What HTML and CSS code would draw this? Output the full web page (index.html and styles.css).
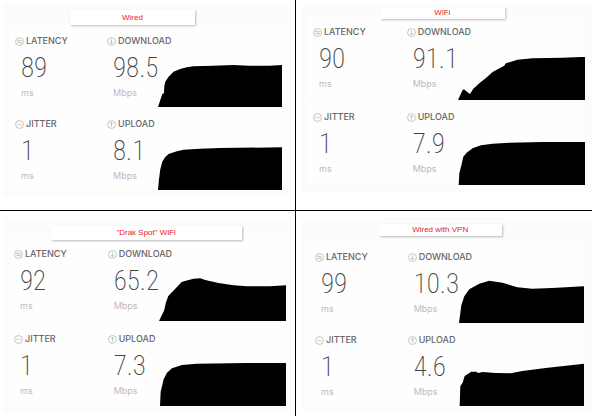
FILE: index.html
```html
<!DOCTYPE html>
<html lang="en">
<head>
    <meta charset="UTF-8">
    <meta name="viewport" content="width=device-width, initial-scale=1.0">
    <title>Speed Test Comparison</title>
    <link rel="stylesheet" href="styles.css">
</head>
<body>
    <svg class="symbols" aria-hidden="true">
        <symbol id="latency" viewBox="0 0 16 16">
            <circle cx="8" cy="8" r="7"/>
            <path d="M12 6.5H4.5L7 4M4 9.5h7.500L9 12"/>
        </symbol>
        <symbol id="jitter" viewBox="0 0 16 16">
            <circle cx="8" cy="8" r="7"/>
            <path d="M4 8.500q2-2.500 4-.5t4-.5"/>
        </symbol>
        <symbol id="download" viewBox="0 0 16 16">
            <circle cx="8" cy="8" r="7"/>
            <path d="M8 4v8M5 9l3 3 3-3"/>
        </symbol>
        <symbol id="upload" viewBox="0 0 16 16">
            <circle cx="8" cy="8" r="7"/>
            <path d="M8 12V4M5 7l3-3 3 3"/>
        </symbol>
    </svg>

    <main class="comparison">
        <section class="quadrant wired">
            <div class="panel">
                <h2 class="tag">Wired</h2>
                <div class="results">
                    <div class="cell">
                        <h3><svg class="icon"><use href="#latency"/></svg>LATENCY</h3>
                        <p class="reading"><span class="value">89</span><span class="unit">ms</span></p>
                    </div>
                    <div class="cell">
                        <h3><svg class="icon"><use href="#download"/></svg>DOWNLOAD</h3>
                        <p class="reading"><span class="value">98.5</span><span class="unit">Mbps</span></p>
                        <svg class="chart" viewBox="33 192 375 129" preserveAspectRatio="none">
                            <path d="M33 321L40 300L46 282L51 280L52 260L55 245L65 230L80 215L100 207L120 202L140 199L200 197L260 195L310 197L370 197L408 195V321Z"/>
                        </svg>
                    </div>
                    <div class="cell">
                        <h3><svg class="icon"><use href="#jitter"/></svg>JITTER</h3>
                        <p class="reading"><span class="value">1</span><span class="unit">ms</span></p>
                    </div>
                    <div class="cell">
                        <h3><svg class="icon"><use href="#upload"/></svg>UPLOAD</h3>
                        <p class="reading"><span class="value">8.1</span><span class="unit">Mbps</span></p>
                        <svg class="chart" viewBox="33 128 375 129" preserveAspectRatio="none">
                            <path d="M33 257L36 225L40 195L46 172L55 158L65 149L90 141L110 136L160 133L220 131L408 129V257Z"/>
                        </svg>
                    </div>
                </div>
            </div>
        </section>

        <section class="quadrant wifi">
            <div class="panel">
                <h2 class="tag">WiFi</h2>
                <div class="results">
                    <div class="cell">
                        <h3><svg class="icon"><use href="#latency"/></svg>LATENCY</h3>
                        <p class="reading"><span class="value">90</span><span class="unit">ms</span></p>
                    </div>
                    <div class="cell">
                        <h3><svg class="icon"><use href="#download"/></svg>DOWNLOAD</h3>
                        <p class="reading"><span class="value">91.1</span><span class="unit">Mbps</span></p>
                        <svg class="chart" viewBox="46 170 383 129" preserveAspectRatio="none">
                            <path d="M46 299L56 277L60 269L64 267L70 272L82 281L92 265L110 249L130 233L150 215L185 196L190 189L225 178L270 174L360 172L415 170H429V299Z"/>
                        </svg>
                    </div>
                    <div class="cell">
                        <h3><svg class="icon"><use href="#jitter"/></svg>JITTER</h3>
                        <p class="reading"><span class="value">1</span><span class="unit">ms</span></p>
                    </div>
                    <div class="cell">
                        <h3><svg class="icon"><use href="#upload"/></svg>UPLOAD</h3>
                        <p class="reading"><span class="value">7.9</span><span class="unit">Mbps</span></p>
                        <svg class="chart" viewBox="46 111 383 129" preserveAspectRatio="none">
                            <path d="M48 240L50 205L55 185L62 155L72 143L90 130L115 121L150 116L200 113L300 111H429V240Z"/>
                        </svg>
                    </div>
                </div>
            </div>
        </section>

        <section class="quadrant spot">
            <div class="panel">
                <h2 class="tag">"Drak Spot" WiFi</h2>
                <div class="results">
                    <div class="cell">
                        <h3><svg class="icon"><use href="#latency"/></svg>LATENCY</h3>
                        <p class="reading"><span class="value">92</span><span class="unit">ms</span></p>
                    </div>
                    <div class="cell">
                        <h3><svg class="icon"><use href="#download"/></svg>DOWNLOAD</h3>
                        <p class="reading"><span class="value">65.2</span><span class="unit">Mbps</span></p>
                        <svg class="chart" viewBox="36 204 383 129" preserveAspectRatio="none">
                            <path d="M36 333L52 300L56 280L64 258L90 231L104 216L125 210L140 206L160 205L175 210L215 219L260 226L300 229L370 229L419 226V333Z"/>
                        </svg>
                    </div>
                    <div class="cell">
                        <h3><svg class="icon"><use href="#jitter"/></svg>JITTER</h3>
                        <p class="reading"><span class="value">1</span><span class="unit">ms</span></p>
                    </div>
                    <div class="cell">
                        <h3><svg class="icon"><use href="#upload"/></svg>UPLOAD</h3>
                        <p class="reading"><span class="value">7.3</span><span class="unit">Mbps</span></p>
                        <svg class="chart" viewBox="36 461 383 129" preserveAspectRatio="none">
                            <path d="M39 590L41 548L50 510L60 490L75 477L105 467L150 463L300 461H419V590Z"/>
                        </svg>
                    </div>
                </div>
            </div>
        </section>

        <section class="quadrant vpn">
            <div class="panel">
                <h2 class="tag">Wired with VPN</h2>
                <div class="results">
                    <div class="cell">
                        <h3><svg class="icon"><use href="#latency"/></svg>LATENCY</h3>
                        <p class="reading"><span class="value">99</span><span class="unit">ms</span></p>
                    </div>
                    <div class="cell">
                        <h3><svg class="icon"><use href="#download"/></svg>DOWNLOAD</h3>
                        <p class="reading"><span class="value">10.3</span><span class="unit">Mbps</span></p>
                        <svg class="chart" viewBox="49 209 378 129" preserveAspectRatio="none">
                            <path d="M49 338L56 285L65 258L80 237L110 220L140 211L180 217L225 231L270 235L330 233L427 228V338Z"/>
                        </svg>
                    </div>
                    <div class="cell">
                        <h3><svg class="icon"><use href="#jitter"/></svg>JITTER</h3>
                        <p class="reading"><span class="value">1</span><span class="unit">ms</span></p>
                    </div>
                    <div class="cell">
                        <h3><svg class="icon"><use href="#upload"/></svg>UPLOAD</h3>
                        <p class="reading"><span class="value">4.6</span><span class="unit">Mbps</span></p>
                        <svg class="chart" viewBox="49 461 378 129" preserveAspectRatio="none">
                            <path d="M51 590L53 530L60 520L66 500L86 487L102 487L106 491L120 488L160 491L205 492L240 485L310 476L427 463V590Z"/>
                        </svg>
                    </div>
                </div>
            </div>
        </section>
    </main>
</body>
</html>
```

FILE: styles.css
```css
* {
    box-sizing: border-box;
}
body {
    margin: 0;
    background-color: white;
    font-family: Inter, "Liberation Sans", sans-serif;
}
h2, h3, p {
    margin: 0;
}
.symbols {
    display: none;
}
.comparison {
    display: grid;
    grid-template-columns: 1fr 1fr;
}
.quadrant {
    min-width: 0;
    padding: 3px 3px 13px;
}
.wired, .spot {
    border-right: 1px solid black;
}
.wired, .wifi {
    border-bottom: 1px solid black;
}
.wifi, .vpn {
    padding-left: 6px;
    padding-right: 0;
}
.spot, .vpn {
    padding-top: 7px;
    padding-bottom: 3px;
}
.panel {
    display: flow-root;
    padding: 0 6px 7px;
    background-color: #fcfcfc;
}
.wired .panel {
    padding-left: 7px;
    padding-right: 10px;
}
.wifi .panel {
    padding-right: 7px;
}
.vpn .panel {
    padding-left: 8px;
    padding-right: 8px;
}

/* name of the connection, overlaps the top of the results */
.tag {
    position: relative;
    width: 46%;
    margin: 7px 0 1px 22%;
    background-color: white;
    box-shadow: 1px 1px 2px #bbb;
    color: #e8202a;
    font: 8px/15px "Liberation Sans", Arial, sans-serif;
    text-align: center;
}
.wifi .tag {
    width: 45%;
    margin: 4px 0 -2px 26%;
    line-height: 12px;
}
.spot .tag {
    width: 69%;
    margin: 8px 0 -2px 15%;
    line-height: 14px;
}
.vpn .tag {
    width: 45%;
    margin: 6px 0 6px 25%;
    line-height: 12px;
}

.results {
    display: grid;
    grid-template-columns: minmax(0, 1fr) minmax(0, 2fr);
    grid-auto-rows: 81px;
    gap: 2px;
}
.wifi .results, .spot .results {
    grid-auto-rows: 83px;
}
.cell {
    display: grid;
    grid-template-columns: 56px 1fr;
    grid-template-rows: 20px 1fr;
    padding-top: 5px;
    background-color: #fefefe;
}
.spot .cell {
    padding-top: 6px;
}
.cell h3 {
    grid-column: 1 / 3;
    display: flex;
    align-items: center;
    gap: 2px;
    padding-left: 5px;
    color: #666;
    font-size: 9px;
    font-weight: 500;
    line-height: 20px;
}
.icon {
    width: 9px;
    height: 9px;
    fill: none;
    stroke: #999;
    stroke-width: 1;
}
.reading {
    display: flex;
    flex-direction: column;
    padding-left: 11px;
}
.value {
    color: #444;
    font-family: "Roboto Condensed", "Liberation Sans Narrow", Roboto, sans-serif;
    font-size: 27px;
    font-weight: 200;
    line-height: 35px;
}
.unit {
    color: #bbb;
    font-size: 9px;
    line-height: 14px;
}
.chart {
    align-self: end;
    width: 100%;
    height: 43px;
    fill: black;
}
```
